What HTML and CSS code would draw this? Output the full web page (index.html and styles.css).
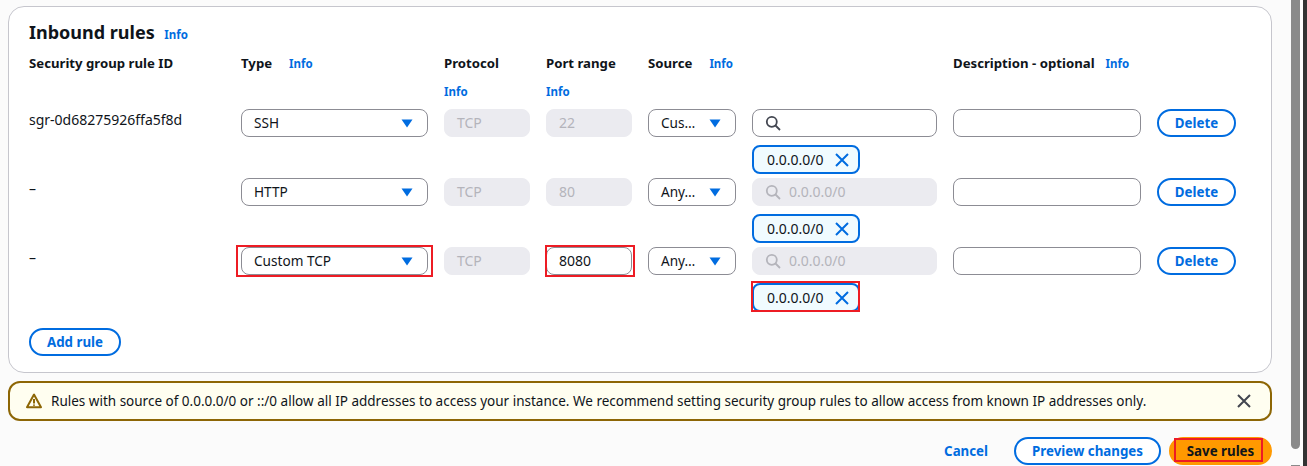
FILE: index.html
```html
<!DOCTYPE html>
<html lang="en">
<head>
<meta charset="utf-8">
<title>Inbound rules</title>
<link rel="stylesheet" href="styles.css">
</head>
<body>
<div class="page">
  <main class="main">
    <section class="panel">
      <h2 class="title">Inbound rules <a class="info info-title">Info</a></h2>
      <div class="head grid">
        <div class="th">Security group rule ID</div>
        <div class="th">Type<a class="info info-type">Info</a></div>
        <div class="th">Protocol<a class="info info-under">Info</a></div>
        <div class="th">Port range<a class="info info-under">Info</a></div>
        <div class="th th-source">Source<a class="info info-type">Info</a></div>
        <div class="th th-desc">Description - optional<a class="info info-desc">Info</a></div>
      </div>

      <div class="rule grid">
        <div class="id">sgr-0d68275926ffa5f8d</div>
        <div class="field select"><span>SSH</span><svg class="caret" viewBox="0 0 12 9"><path d="M0.5 0.5h11L6 8.5z"/></svg></div>
        <div class="field disabled">TCP</div>
        <div class="field disabled">22</div>
        <div class="field select select-sm"><span>Cus…</span><svg class="caret" viewBox="0 0 12 9"><path d="M0.5 0.5h11L6 8.5z"/></svg></div>
        <div class="field search"><svg class="mag" viewBox="0 0 16 16"><circle cx="6.8" cy="6.8" r="5"/><path d="M10.5 10.5L15 15"/></svg></div>
        <div class="field"></div>
        <button class="btn del">Delete</button>
        <div class="token"><span>0.0.0.0/0</span><svg class="x" viewBox="0 0 16 16"><path d="M2 2l12 12M14 2L2 14"/></svg></div>
      </div>

      <div class="rule grid">
        <div class="id">–</div>
        <div class="field select"><span>HTTP</span><svg class="caret" viewBox="0 0 12 9"><path d="M0.5 0.5h11L6 8.5z"/></svg></div>
        <div class="field disabled">TCP</div>
        <div class="field disabled">80</div>
        <div class="field select select-sm"><span>Any…</span><svg class="caret" viewBox="0 0 12 9"><path d="M0.5 0.5h11L6 8.5z"/></svg></div>
        <div class="field search disabled"><svg class="mag" viewBox="0 0 16 16"><circle cx="6.8" cy="6.8" r="5"/><path d="M10.5 10.5L15 15"/></svg><span>0.0.0.0/0</span></div>
        <div class="field"></div>
        <button class="btn del">Delete</button>
        <div class="token"><span>0.0.0.0/0</span><svg class="x" viewBox="0 0 16 16"><path d="M2 2l12 12M14 2L2 14"/></svg></div>
      </div>

      <div class="rule grid">
        <div class="id">–</div>
        <div class="field select mark mark-type"><span>Custom TCP</span><svg class="caret" viewBox="0 0 12 9"><path d="M0.5 0.5h11L6 8.5z"/></svg></div>
        <div class="field disabled">TCP</div>
        <div class="field mark mark-port">8080</div>
        <div class="field select select-sm"><span>Any…</span><svg class="caret" viewBox="0 0 12 9"><path d="M0.5 0.5h11L6 8.5z"/></svg></div>
        <div class="field search disabled"><svg class="mag" viewBox="0 0 16 16"><circle cx="6.8" cy="6.8" r="5"/><path d="M10.5 10.5L15 15"/></svg><span>0.0.0.0/0</span></div>
        <div class="field"></div>
        <button class="btn del">Delete</button>
        <div class="token mark mark-token"><span>0.0.0.0/0</span><svg class="x" viewBox="0 0 16 16"><path d="M2 2l12 12M14 2L2 14"/></svg></div>
      </div>

      <button class="btn add">Add rule</button>
    </section>

    <div class="alert">
      <svg class="warn" viewBox="0 0 16 16"><path d="M8 1.6L1 14.2h14z"/><path d="M8 6v4.4M8 11.4v1.4"/></svg>
      <span class="alert-text">Rules with source of 0.0.0.0/0 or ::/0 allow all IP addresses to access your instance. We recommend setting security group rules to allow access from known IP addresses only.</span>
      <svg class="close" viewBox="0 0 16 16"><path d="M2 2l12 12M14 2L2 14"/></svg>
    </div>

    <div class="actions">
      <a class="cancel">Cancel</a>
      <button class="btn preview">Preview changes</button>
      <button class="btn save mark mark-save">Save rules</button>
    </div>
  </main>
  <div class="scroll">
    <div class="track"><div class="thumb"></div><div class="thumb-next"></div></div>
    <div class="gap"></div>
    <div class="edge"></div>
  </div>
</div>
</body>
</html>
```
FILE: styles.css
```css
* { box-sizing: border-box; }
html, body { margin: 0; height: 466px; overflow: hidden; }
body {
  font-family: "Noto Sans", "Open Sans", sans-serif;
  font-size: 14px;
  line-height: 20px;
  color: #0f141a;
  background: #fbfbfb;
}
.page { display: flex; height: 466px; }
.main { flex: 1; min-width: 0; padding: 6px 19px 0 8px; }

.panel {
  height: 367px;
  background: #fff;
  border: 1px solid #c6c6cd;
  border-radius: 16px;
  padding: 12px 20px 0;
}
.title { margin: 0; font-size: 18px; line-height: 26px; font-weight: 700; }
.info { color: #006ce0; font-size: 11.5px; font-weight: 700; line-height: 16px; }
.info-title { margin-left: 5px; }
.info-type { margin-left: 17px; }
.info-desc { margin-left: 11px; }
.info-under { display: block; margin-top: 11px; }

.grid {
  display: grid;
  grid-template-columns: 196px 187px 86px 86px 88px 185px 188px 79px;
  column-gap: 16px;
  width: 1207px;
}
.head { height: 64px; padding-top: 8px; }
.th { font-weight: 700; font-size: 13.2px; }
.th-source { grid-column: 5 / span 2; }
.th-desc { grid-column: 7 / span 2; }

.rule { row-gap: 8px; height: 69px; align-content: start; }
.id { padding-top: 1px; line-height: 20px; }
.field {
  position: relative;
  display: flex;
  align-items: center;
  height: 28px;
  border: 1px solid #8c8c94;
  border-radius: 8px;
  padding: 0 12px;
  background: #fff;
  white-space: nowrap;
}
.select { justify-content: space-between; padding-right: 14px; font-size: 13.6px; }
.select-sm { padding-right: 14px; }
.caret { width: 12px; height: 9px; flex: none; fill: #006ce0; }
.disabled { background: #ebebf0; border-color: #ebebf0; color: #b4b4bb; }
.search { gap: 8px; }
.mag { width: 16px; height: 16px; flex: none; fill: none; stroke: #424650; stroke-width: 1.8; }
.disabled .mag { stroke: #b4b4bb; }

.token {
  position: relative;
  grid-column: 6;
  display: flex;
  align-items: center;
  justify-content: space-between;
  width: 108px;
  height: 29px;
  padding: 0 8px 0 13px;
  background: #f0fbff;
  border: 2px solid #006ce0;
  border-radius: 8px;
}
.x { width: 16px; height: 16px; fill: none; stroke: #006ce0; stroke-width: 2; }

.btn {
  display: inline-flex;
  align-items: center;
  justify-content: center;
  height: 28px;
  padding: 0;
  background: #fff;
  border: 2px solid #006ce0;
  border-radius: 20px;
  color: #006ce0;
  font: 700 13.3px/20px "Noto Sans", "Open Sans", sans-serif;
}
.add { width: 92px; margin-top: 12px; }

.alert {
  display: flex;
  align-items: center;
  height: 40px;
  margin-top: 8px;
  padding: 0 18px 0 16px;
  background: #fffef0;
  border: 2px solid #8d6605;
  border-radius: 12px;
  font-size: 13.5px;
}
.warn { width: 16px; height: 16px; flex: none; fill: none; stroke: #8d6605; stroke-width: 2; stroke-linejoin: round; }
.alert-text { flex: 1; margin-left: 9px; white-space: nowrap; }
.close { width: 16px; height: 16px; flex: none; fill: none; stroke: #424650; stroke-width: 2; }

.actions { display: flex; align-items: center; justify-content: flex-end; height: 28px; margin-top: 16px; }
.cancel { margin-right: 26px; color: #006ce0; font-weight: 700; font-size: 13.3px; }
.preview { width: 147px; margin-right: 8px; }
.save { width: 103px; background: #ff9900; border-color: #ff9900; color: #0f141a; }

.mark { position: relative; }
.mark::after {
  content: "";
  position: absolute;
  border: 2px solid #ed1c24;
  pointer-events: none;
}
.mark-type::after { inset: -3px -6px -3px -6px; }
.mark-port::after { inset: -3px -4px -3px -2px; }
.mark-token::after { inset: -4px -2px -2px -3px; }
.mark-save::after { inset: -1px 7px 1px 3px; }

.scroll { display: flex; flex: none; width: 16px; height: 466px; }
.track { display: flex; flex-direction: column; justify-content: space-between; width: 9px; }
.thumb { height: 449px; background: #8a8a8a; border-radius: 0 0 5px 5px; }
.thumb-next { height: 1px; background: #8a8a8a; }
.gap { width: 3px; background: #fdfdfd; }
.edge { width: 4px; background: #333; }
```
